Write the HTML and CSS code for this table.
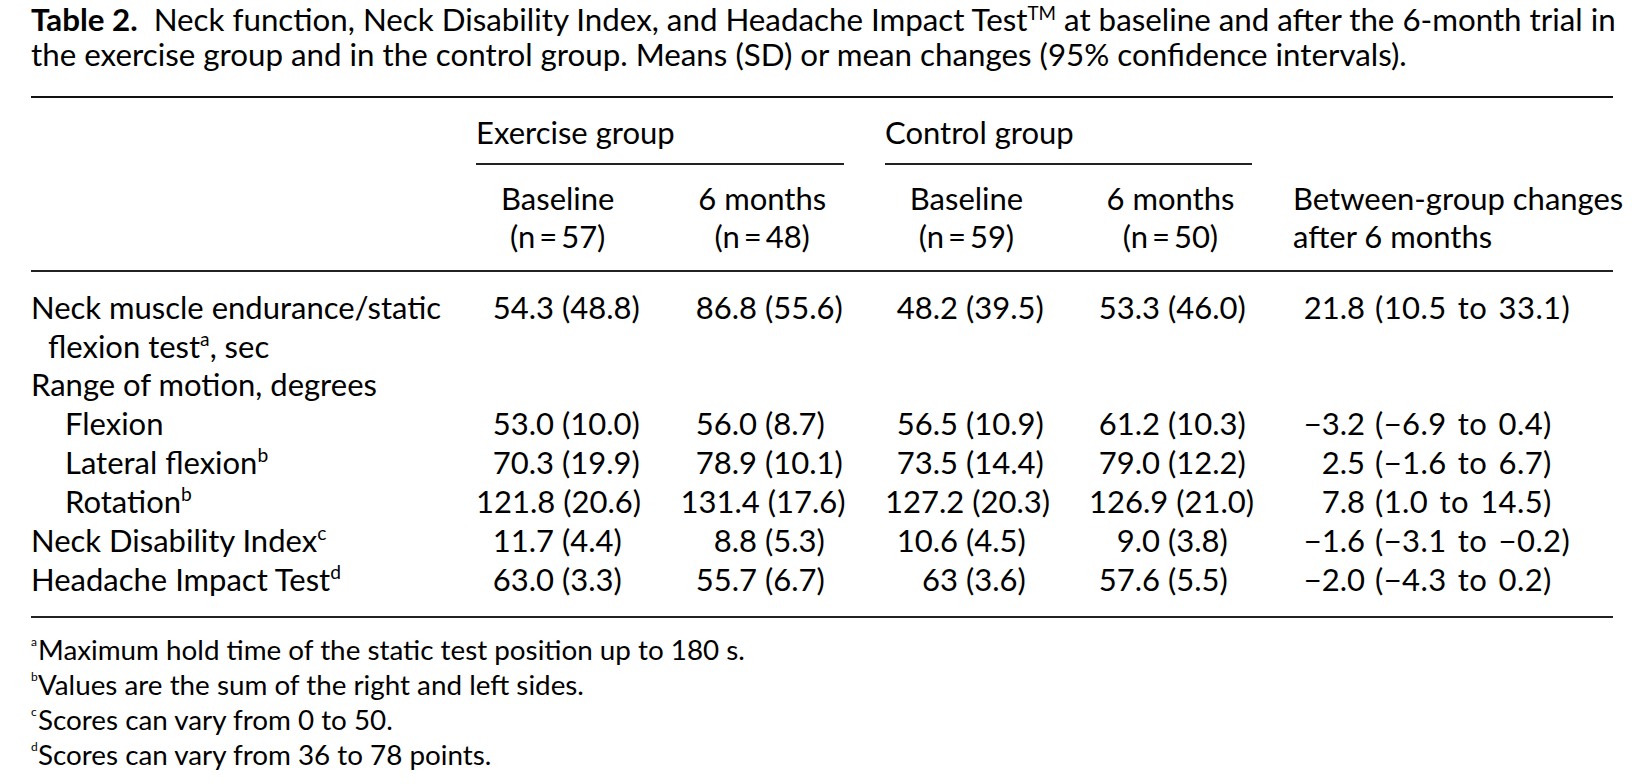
FILE: index.html
```html
<!DOCTYPE html>
<html lang="en">
<head>
<meta charset="utf-8">
<title>Table 2</title>
<link rel="stylesheet" href="styles.css">
</head>
<body>
<div class="page">
  <p class="caption">
    <span class="cap-line"><b>Table 2.</b>&nbsp; Neck function, Neck Disability Index, and Headache Impact Test<sup class="tm">TM</sup> at baseline and after the 6-month trial in</span>
    <span class="cap-line">the exercise group and in the control group. Means (SD) or mean changes (95% confidence intervals).</span>
  </p>

  <div class="table">
    <div class="thead">
      <div class="row grp-row">
        <div class="label"></div>
        <div class="grp">Exercise group</div>
        <div class="grp">Control group</div>
        <div></div>
      </div>
      <div class="row sub-row">
        <div class="label"></div>
        <div class="hc">Baseline<br>(n&thinsp;=&thinsp;57)</div>
        <div class="hc">6 months<br>(n&thinsp;=&thinsp;48)</div>
        <div class="hc">Baseline<br>(n&thinsp;=&thinsp;59)</div>
        <div class="hc">6 months<br>(n&thinsp;=&thinsp;50)</div>
        <div class="hl">Between-group changes<br>after 6 months</div>
      </div>
    </div>

    <div class="tbody">
      <div class="row">
        <div class="label wrap">Neck muscle endurance/static<br>flexion test<sup>a</sup>, sec</div>
        <div class="num c1"><span class="m">54.3</span><span class="s">(48.8)</span></div>
        <div class="num c2"><span class="m">86.8</span><span class="s">(55.6)</span></div>
        <div class="num c3"><span class="m">48.2</span><span class="s">(39.5)</span></div>
        <div class="num c4"><span class="m">53.3</span><span class="s">(46.0)</span></div>
        <div class="num c5"><span class="m">21.8</span><span class="s">(10.5 to 33.1)</span></div>
      </div>
      <div class="row">
        <div class="label">Range of motion, degrees</div>
      </div>
      <div class="row">
        <div class="label sub">Flexion</div>
        <div class="num c1"><span class="m">53.0</span><span class="s">(10.0)</span></div>
        <div class="num c2"><span class="m">56.0</span><span class="s">(8.7)</span></div>
        <div class="num c3"><span class="m">56.5</span><span class="s">(10.9)</span></div>
        <div class="num c4"><span class="m">61.2</span><span class="s">(10.3)</span></div>
        <div class="num c5"><span class="m">&minus;3.2</span><span class="s">(&minus;6.9 to 0.4)</span></div>
      </div>
      <div class="row">
        <div class="label sub">Lateral flexion<sup>b</sup></div>
        <div class="num c1"><span class="m">70.3</span><span class="s">(19.9)</span></div>
        <div class="num c2"><span class="m">78.9</span><span class="s">(10.1)</span></div>
        <div class="num c3"><span class="m">73.5</span><span class="s">(14.4)</span></div>
        <div class="num c4"><span class="m">79.0</span><span class="s">(12.2)</span></div>
        <div class="num c5"><span class="m">2.5</span><span class="s">(&minus;1.6 to 6.7)</span></div>
      </div>
      <div class="row">
        <div class="label sub">Rotation<sup>b</sup></div>
        <div class="num c1"><span class="m">121.8</span><span class="s">(20.6)</span></div>
        <div class="num c2"><span class="m">131.4</span><span class="s">(17.6)</span></div>
        <div class="num c3"><span class="m">127.2</span><span class="s">(20.3)</span></div>
        <div class="num c4"><span class="m">126.9</span><span class="s">(21.0)</span></div>
        <div class="num c5"><span class="m">7.8</span><span class="s">(1.0 to 14.5)</span></div>
      </div>
      <div class="row">
        <div class="label">Neck Disability Index<sup>c</sup></div>
        <div class="num c1"><span class="m">11.7</span><span class="s">(4.4)</span></div>
        <div class="num c2"><span class="m">8.8</span><span class="s">(5.3)</span></div>
        <div class="num c3"><span class="m">10.6</span><span class="s">(4.5)</span></div>
        <div class="num c4"><span class="m">9.0</span><span class="s">(3.8)</span></div>
        <div class="num c5"><span class="m">&minus;1.6</span><span class="s">(&minus;3.1 to &minus;0.2)</span></div>
      </div>
      <div class="row">
        <div class="label">Headache Impact Test<sup>d</sup></div>
        <div class="num c1"><span class="m">63.0</span><span class="s">(3.3)</span></div>
        <div class="num c2"><span class="m">55.7</span><span class="s">(6.7)</span></div>
        <div class="num c3"><span class="m">63</span><span class="s">(3.6)</span></div>
        <div class="num c4"><span class="m">57.6</span><span class="s">(5.5)</span></div>
        <div class="num c5"><span class="m">&minus;2.0</span><span class="s">(&minus;4.3 to 0.2)</span></div>
      </div>
    </div>
  </div>

  <div class="notes">
    <p><sup>a</sup>Maximum hold time of the static test position up to 180 s.</p>
    <p><sup>b</sup>Values are the sum of the right and left sides.</p>
    <p><sup>c</sup>Scores can vary from 0 to 50.</p>
    <p><sup>d</sup>Scores can vary from 36 to 78 points.</p>
  </div>
</div>
</body>
</html>
```

FILE: styles.css
```css
* { box-sizing: border-box; }

html, body {
  margin: 0;
  padding: 0;
  background: #ffffff;
}

body {
  font-family: Lato, "Open Sans", "DejaVu Sans", sans-serif;
  font-size: 31px;
  color: #000;
}

.page {
  width: 1582px;
  margin-left: 31px;
  padding-top: 2px;
}

.caption {
  margin: 0;
  font-size: 31.3px;
  line-height: 35px;
  padding-bottom: 24px;
  border-bottom: 2px solid #111;
}

.cap-line {
  display: block;
  white-space: nowrap;
}

.caption b { font-weight: 700; }

.caption sup.tm {
  font-size: 0.6em;
  vertical-align: 0.6em;
  line-height: 0;
}

.row {
  display: grid;
  grid-template-columns: 404px 163.5px 163.5px 163px 163px 1fr;
  column-gap: 41px;
}

.grp-row {
  padding-top: 16px;
  line-height: 37px;
}

.grp-row .grp {
  grid-column: span 2;
  padding-bottom: 12px;
  border-bottom: 2px solid #222;
}

.sub-row {
  padding-top: 15px;
  padding-bottom: 15px;
  line-height: 37.5px;
  border-bottom: 2px solid #222;
}

.hc { text-align: center; white-space: nowrap; }
.hl { text-align: left; white-space: nowrap; }

.tbody {
  padding-top: 16px;
  padding-bottom: 17px;
  border-bottom: 2px solid #222;
}

.tbody .row { line-height: 39px; }

.label {
  padding-left: 17px;
  text-indent: -17px;
  white-space: nowrap;
}

.tbody .row .label.wrap { line-height: 38.5px; }

.label.sub {
  padding-left: 34px;
  text-indent: 0;
}

sup {
  font-size: 0.62em;
  line-height: 0;
  vertical-align: 0.62em;
}

.num {
  display: flex;
  white-space: nowrap;
}

.num .m {
  display: flex;
  justify-content: flex-end;
  flex: 0 0 var(--mw);
}

.num .s { padding-left: 8px; }

.c1 { --mw: 78px; }
.c2 { --mw: 76.5px; }
.c3 { --mw: 73px; }
.c4 { --mw: 71px; }
.c5 { --mw: 72px; }

.c5 .s {
  padding-left: 10px;
  word-spacing: 3px;
  letter-spacing: 0.4px;
}

.notes {
  padding-top: 14px;
  font-size: 27.8px;
  line-height: 35px;
}

.notes p {
  margin: 0;
  padding-left: 7px;
  position: relative;
}

.notes sup {
  position: absolute;
  left: 0;
  top: 4px;
  font-size: 12px;
  line-height: 12px;
  vertical-align: baseline;
}
```
